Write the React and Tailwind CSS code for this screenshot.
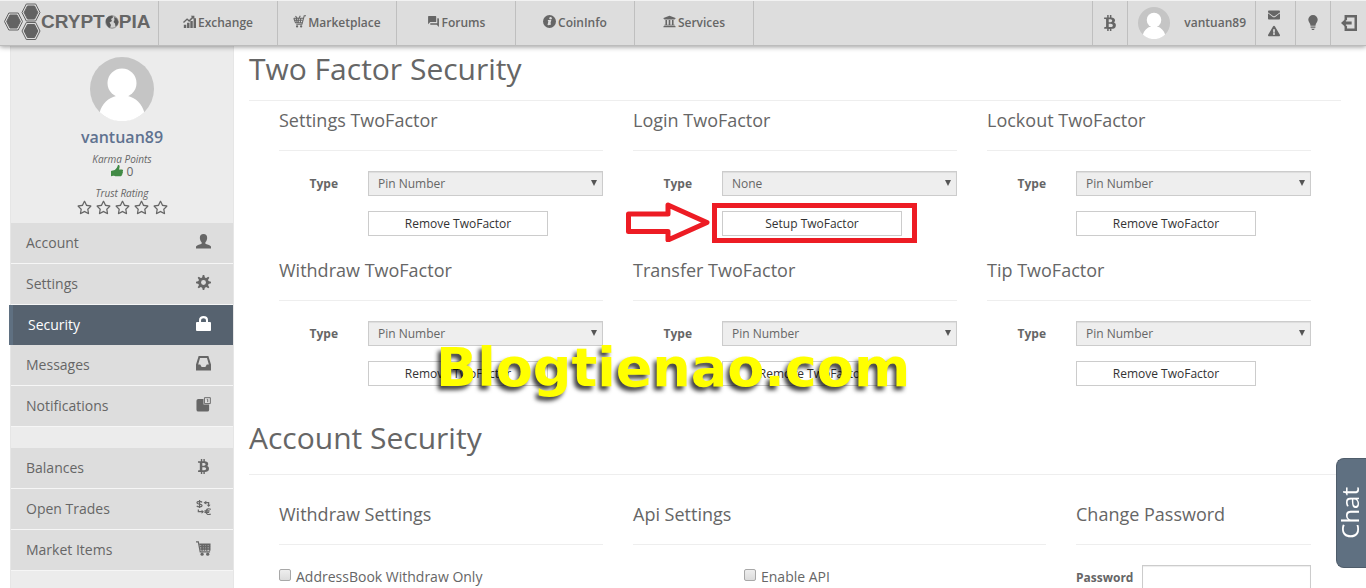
import { useState } from "react";
import {
  FaBtc,
  FaEnvelope,
  FaExclamationTriangle,
  FaRegStar,
  FaUniversity,
} from "react-icons/fa";
import { MdForum } from "react-icons/md";

const ChartIcon = ({ className }) => (
  <svg viewBox="0 0 16 16" className={className} fill="currentColor">
    <path d="M1 12h3v4H1zM5 9.500h3V16H5zM9 7.500h3V16H9zM13 4h3v12h-3z" />
    <path d="M0 8.500 5 4l2.500 2L11 2.500 9.500 1H14v4.500l-1.600-1.600L7.600 8.500 5 6.300 1.200 9.800z" />
  </svg>
);

const BasketIcon = ({ className }) => (
  <svg viewBox="0 0 16 16" className={className} fill="none" stroke="currentColor">
    <path d="M16 1h-2.200L11 11.500H4M1 4h11.500M1 4l2 5.500h8.500M2 6.500h9.500M4 4l1 5.500M6.500 4v5.500M9.500 4 9 9.500M3 1.500l2 2M9 1 7.500 3.500" strokeWidth="1.300" />
    <circle cx="5" cy="14" r="1.400" fill="currentColor" stroke="none" />
    <circle cx="10" cy="14" r="1.400" fill="currentColor" stroke="none" />
  </svg>
);

const InfoIcon = ({ className }) => (
  <svg viewBox="0 0 16 16" className={className}>
    <circle cx="8" cy="8" r="8" fill="currentColor" />
    <circle cx="9.300" cy="4" r="1.500" fill="#dddddd" />
    <path d="M6 7h3.200L8 11.500l1.700-.5M6.300 12.500 7.500 7.500" fill="none" stroke="#dddddd" strokeWidth="1.600" />
  </svg>
);

const BulbIcon = ({ className }) => (
  <svg viewBox="0 0 12 18" className={className} fill="currentColor">
    <path d="M6 0a5.300 5.300 0 0 0-5.300 5.400C.7 8 3.200 9.500 3.200 12h5.600c0-2.500 2.500-4 2.500-6.600A5.300 5.300 0 0 0 6 0zM3.300 13h5.400v1.400H3.300zM4 15.400h4L7 17H5z" />
  </svg>
);

const ExitIcon = ({ className }) => (
  <svg viewBox="0 0 18 18" className={className} fill="currentColor">
    <path d="M4 0h14v18H4v-6h2.800v3.200h8.400V2.800H6.800V6H4z" />
    <path d="M0 9l5.500-5v3.400H12v3.200H5.500V14z" />
  </svg>
);

const UserIcon = ({ className }) => (
  <svg viewBox="0 0 16 16" className={className} fill="currentColor">
    <path d="M8 0C5.500 0 4 1.700 4.100 4.300c.1 2 .9 3.700 1.900 4.600v1.600C4.700 11.300 1 11.800 0 13.300V15.500h16v-2.200C15 11.800 11.300 11.300 10 10.500V8.900c1-.9 1.800-2.600 1.900-4.600C12 1.700 10.500 0 8 0z" />
  </svg>
);

const GearIcon = ({ className }) => (
  <svg viewBox="0 0 16 16" className={className}>
    <g fill="currentColor">
      {[0, 45, 90, 135].map((angle) => (
        <path key={angle} d="M6.500 3 7.200 0h1.600l.7 3v10l-.7 3H7.200l-.7-3z" transform={`rotate(${angle} 8 8)`} />
      ))}
      <circle cx="8" cy="8" r="5.600" />
    </g>
    <circle cx="8" cy="8" r="2.600" fill="#dddddd" />
  </svg>
);

const LockIcon = ({ className }) => (
  <svg viewBox="0 0 16 16" className={className} fill="currentColor">
    <path d="M1 6.500h14a1 1 0 0 1 1 1V15a1 1 0 0 1-1 1H1a1 1 0 0 1-1-1V7.500a1 1 0 0 1 1-1z" />
    <path d="M4.300 7V4.200C4.300 2.200 5.700 1.200 8 1.200s3.700 1 3.700 3V7" fill="none" stroke="currentColor" strokeWidth="2.200" />
  </svg>
);

const TrayIcon = ({ className }) => (
  <svg viewBox="0 0 16 16" className={className} fill="currentColor">
    <path fillRule="evenodd" d="M2.800 0h10.400L16 9v6.500H0V9zM4.300 2 2.300 9H4.500l1.500 2.700h4L11.500 9h2.200l-2-7z" />
  </svg>
);

const NoticeIcon = ({ className }) => (
  <svg viewBox="0 0 16 16" className={className}>
    <path d="M2.500 2H8v6h6v5.500a2 2 0 0 1-2 2H2.500a2 2 0 0 1-2-2V4a2 2 0 0 1 2-2z" fill="currentColor" />
    <path d="M9 .7h6.300V7H9zM11.500 2.500h1v3" fill="none" stroke="currentColor" strokeWidth="1" />
  </svg>
);

const TradeIcon = ({ className }) => (
  <svg viewBox="0 0 16 16" className={className} fill="none" stroke="currentColor" strokeWidth="1.300">
    <path d="M6.500 2.500C5.500 1 1 1 1 3c0 2 5.500.8 5.500 2.800C6.500 7.700 2 7.700.8 6.200M3.800 0v8.500" />
    <path d="M15.700 10c-2.600-1.600-5 0-5 2.500s2.400 4 5 2.500M9 11.700h5.500M9 13.300h5" />
    <path d="M9 2.800h4.500V6M2.500 10v2.500H7" />
    <path d="M8 2.800 11 .8v4zM11.500 5h4l-2 2.400zM6 10.300l2.500 2.200L6 14.700z" fill="currentColor" stroke="none" />
  </svg>
);

const CartIcon = ({ className }) => (
  <svg viewBox="0 0 16 16" className={className} fill="none" stroke="currentColor">
    <path d="M0 1h2.500l2 10.500H15" strokeWidth="1.300" />
    <path d="M3.500 3.500h12M4 6h11.500M4.500 8.500h11M6.500 3v7.500M9 3v7.500M11.500 3v7.500M14.500 3v7.500" strokeWidth="1.800" />
    <circle cx="6.500" cy="14" r="1.700" fill="currentColor" stroke="none" />
    <circle cx="12.500" cy="14" r="1.700" fill="currentColor" stroke="none" />
  </svg>
);

const ThumbIcon = ({ className }) => (
  <svg viewBox="0 0 16 16" className={className} fill="currentColor">
    <path d="M0 8c1.500-1 3.500-1 5-1.500C7 5 8.500 3 9 .5 9.300-.2 11.500 0 11.500 2c0 1.500-.5 3-1 4h4c2 0 2 2 1 2.600.8.800.5 2-.3 2.400.4.900 0 1.800-.8 2.100.2 1-.4 1.900-1.400 1.900H7c-1.500 0-2.500-.7-4-.7L0 15z" />
  </svg>
);

const Avatar = ({ className }) => (
  <svg viewBox="0 0 64 64" className={className} role="img" aria-label="avatar">
    <circle cx="32" cy="32" r="32" fill="#c5c5c5" />
    <circle cx="32" cy="26" r="14.500" fill="#ffffff" />
    <path d="M26 36h12v3c8 2 14 8 16.300 16.200a32 32 0 0 1-44.600 0C12 47 18 41 26 39z" fill="#ffffff" />
  </svg>
);

const Hexagons = () => (
  <svg viewBox="0 0 37 38" className="w-[37px] h-[38px] shrink-0" fill="#636363" stroke="#636363">
    {[
      [9.500, 18.500],
      [27, 9.500],
      [27, 28],
    ].map(([x, y]) => (
      <g key={`${x}-${y}`} transform={`translate(${x} ${y})`}>
        <path d="M-9 0-4.700-8.500H4.700L9 0 4.700 8.500H-4.700z" fill="none" strokeWidth="1" />
        <path d="M-6.800 0-3.500-6.500H3.500L6.800 0 3.500 6.500H-3.500z" strokeWidth="1" />
      </g>
    ))}
  </svg>
);

const Globe = () => (
  <svg viewBox="0 0 14 14" className="w-[14px] h-[14px]">
    <circle cx="7" cy="7" r="6.200" fill="#d0d0d0" stroke="#8a8a8a" strokeWidth="1" />
    <path d="M1 4.500C2.500 1.500 5 .6 7.500.8L8 2.500 6 4l1 2-2.500 1.500L6 10l-1 3C2.500 12 .5 9 1 4.500zM9 2l3 1.500 1.500 3.500-1 3-2 1.500-.5-3L8.500 7l1-2z" fill="#5a5a5a" />
  </svg>
);

const navItems = [
  { label: "Exchange", icon: ChartIcon },
  { label: "Marketplace", icon: BasketIcon },
  { label: "Forums", icon: MdForum },
  { label: "CoinInfo", icon: InfoIcon },
  { label: "Services", icon: FaUniversity },
];

const accountLinks = [
  { label: "Account", icon: UserIcon },
  { label: "Settings", icon: GearIcon },
  { label: "Security", icon: LockIcon },
  { label: "Messages", icon: TrayIcon },
  { label: "Notifications", icon: NoticeIcon },
];

const marketLinks = [
  { label: "Balances", icon: FaBtc },
  { label: "Open Trades", icon: TradeIcon },
  { label: "Market Items", icon: CartIcon },
];

const twoFactors = [
  { name: "Settings", type: "Pin Number" },
  { name: "Login", type: "None" },
  { name: "Lockout", type: "Pin Number" },
  { name: "Withdraw", type: "Pin Number" },
  { name: "Transfer", type: "Pin Number" },
  { name: "Tip", type: "Pin Number" },
];

const Header = () => (
  <header className="relative z-10 flex h-[46px] shrink-0 border-t border-b border-t-[#f2f2f2] border-b-[#bcbcbc] bg-[#dddddd] shadow-[0_1px_5px_rgba(0,0,0,0.4)]">
    <a href="#" className="flex w-[159px] items-center border-r border-[#bfbfbf] pb-[2px] pl-1">
      <Hexagons />
      <span className="flex items-center font-['Liberation_Sans'] text-[19px] leading-5 font-bold text-[#666666]">
        CRYPT
        <Globe />
        PIA
      </span>
    </a>
    <nav className="flex">
      {navItems.map(({ label, icon: Icon }) => (
        <a
          key={label}
          href="#"
          className="flex w-[119px] items-center justify-center gap-[2px] border-r border-[#bfbfbf] text-[12px] font-semibold"
        >
          <Icon className="mb-[3px] h-[13px] w-[13px]" />
          {label}
        </a>
      ))}
    </nav>
    <div className="ml-auto flex">
      <a href="#" aria-label="Balances" className="flex w-9 items-center justify-center border-x border-[#bfbfbf]">
        <FaBtc className="h-4 w-4" />
      </a>
      <a
        href="#"
        className="flex w-32 items-center justify-between border-r border-[#bfbfbf] pr-[9px] pl-[10px] text-[12px] font-semibold"
      >
        <Avatar className="h-8 w-8" />
        vantuan89
      </a>
      <div className="flex w-10 flex-col items-center justify-center gap-1 border-r border-[#bfbfbf] pr-1">
        <FaEnvelope className="h-3 w-3" />
        <FaExclamationTriangle className="h-3 w-3" />
      </div>
      <button type="button" aria-label="Theme" className="flex w-[35px] items-center justify-center border-r border-[#bfbfbf]">
        <BulbIcon className="h-4 w-3" />
      </button>
      <button type="button" aria-label="Log out" className="flex w-[35px] items-center justify-center">
        <ExitIcon className="h-4 w-4" />
      </button>
    </div>
  </header>
);

const SideLink = ({ label, icon: Icon, active, onClick }) => (
  <a
    href="#"
    onClick={onClick}
    className={
      active
        ? "relative -ml-[2px] flex h-10 items-center justify-between border-l-4 border-[#5f7081] bg-[#56626f] pr-[22px] pb-[2px] pl-[15px] text-white"
        : "flex h-[41px] items-center justify-between border-b border-[#f6f6f6] bg-[#dddddd] pr-[22px] pb-[2px] pl-[15px]"
    }
  >
    {label}
    <Icon className="mb-[2px] h-[15px] w-[15px]" />
  </a>
);

const Sidebar = ({ active, onSelect }) => (
  <aside className="ml-[10px] w-56 shrink-0 border-x border-[#e6e6e6] bg-[#ececec]">
    <div className="flex h-[177px] flex-col items-center pt-[11px]">
      <Avatar className="h-16 w-16" />
      <a href="#" className="mt-1 text-[16px] leading-6 font-semibold text-[#5f7290]">
        vantuan89
      </a>
      <em className="mt-1 text-[10px] leading-3">Karma Points</em>
      <span className="flex items-center gap-1 text-[12px] leading-3">
        <ThumbIcon className="mb-[2px] h-3 w-3 text-[#418a45]" />0
      </span>
      <em className="mt-2 text-[10px] leading-3">Trust Rating</em>
      <span className="mt-[1px] flex gap-1">
        {[1, 2, 3, 4, 5].map((star) => (
          <FaRegStar key={star} className="h-[15px] w-[15px]" />
        ))}
      </span>
    </div>
    <nav className="text-[14px]">
      {accountLinks.map((link) => (
        <SideLink key={link.label} {...link} active={active === link.label} onClick={() => onSelect(link.label)} />
      ))}
      <div className="h-[21px]" />
      {marketLinks.map((link) => (
        <SideLink key={link.label} {...link} active={active === link.label} onClick={() => onSelect(link.label)} />
      ))}
    </nav>
  </aside>
);

// Red marker around the setup button
const Highlight = () => (
  <>
    <div className="pointer-events-none absolute -top-2 -left-[10px] h-10 w-[205px] border-5 border-[#ed1c24]" />
    <svg
      viewBox="0 0 84 40"
      className="pointer-events-none absolute -top-[9px] -left-24 h-10 w-[84px]"
      fill="#ffffff"
      stroke="#ed1c24"
      strokeWidth="5"
      strokeLinejoin="round"
    >
      <path d="M2.500 12H42V3L81 20.500 42 38V29.500H2.500z" />
    </svg>
  </>
);

const TwoFactorForm = ({ name, type }) => (
  <form>
    <h3 className="text-[18px] leading-5">{name} TwoFactor</h3>
    <hr className="my-5 border-[#eeeeee]" />
    <div className="flex items-center gap-[30px]">
      <label htmlFor={`type-${name}`} className="w-[59px] text-right text-[12px] font-bold">
        Type
      </label>
      <div className="relative flex-1">
        <select
          id={`type-${name}`}
          disabled
          className="block h-[25px] w-full appearance-none border border-[#cccccc] bg-[#eeeeee] px-[9px] text-[12px] leading-5 opacity-100 shadow-[inset_0_1px_1px_rgba(0,0,0,0.075)]"
        >
          <option>{type}</option>
        </select>
        <svg viewBox="0 0 6 6" className="pointer-events-none absolute top-[9px] right-[6px] h-[6px] w-[6px]" fill="#555555">
          <path d="M0 0h6L3 6z" />
        </svg>
      </div>
    </div>
    <div className="relative mt-[15px] ml-[89px] w-[180px]">
      <button type="button" className="block h-[25px] w-full border border-[#cccccc] bg-white text-[12px] text-[#333333]">
        {type === "None" ? "Setup TwoFactor" : "Remove TwoFactor"}
      </button>
      {type === "None" && <Highlight />}
    </div>
  </form>
);

const CheckBox = ({ label }) => (
  <label className="flex items-center gap-[5px] pt-[2px] text-[14px] leading-5">
    <input
      type="checkbox"
      className="mb-1 h-3 w-3 appearance-none rounded-[2px] border border-[#a8a8a8] bg-linear-to-b from-[#eeeeee] to-[#dcdcdc] checked:bg-[#5f7081]"
    />
    {label}
  </label>
);

export default function App() {
  const [active, setActive] = useState("Security");

  return (
    <div className="flex h-screen flex-col overflow-hidden bg-white font-['Open_Sans',sans-serif] text-[#666666]">
      <Header />
      <div className="flex min-h-0 flex-1">
        <Sidebar active={active} onSelect={setActive} />
        <main className="min-w-0 flex-1 pt-[6px] pr-[25px] pl-[15px]">
          <h2 className="text-[30px] leading-[33px]">Two Factor Security</h2>
          <hr className="mt-[15px] border-[#eeeeee]" />
          <section className="relative mt-[9px] grid grid-cols-3 gap-x-[30px] gap-y-6 px-[30px]">
            {twoFactors.map((item) => (
              <TwoFactorForm key={item.name} {...item} />
            ))}
            <span className="pointer-events-none absolute -bottom-3 left-[187px] font-['DejaVu_Sans'] text-[54px] leading-[60px] font-bold text-[#ffff00] [text-shadow:-3px_4px_4px_rgba(0,0,0,0.75)]">
              Blogtienao.com
            </span>
          </section>

          <h2 className="mt-[35px] text-[30px] leading-[33px]">Account Security</h2>
          <hr className="mt-5 border-[#eeeeee]" />
          <section className="mt-[29px] grid grid-cols-[324fr_413fr_235fr] gap-x-[30px] px-[30px]">
            <div>
              <h3 className="text-[18px] leading-5">Withdraw Settings</h3>
              <hr className="my-5 border-[#eeeeee]" />
              <CheckBox label="AddressBook Withdraw Only" />
            </div>
            <div>
              <h3 className="text-[18px] leading-5">Api Settings</h3>
              <hr className="my-5 border-[#eeeeee]" />
              <div className="pl-[111px]">
                <CheckBox label="Enable API" />
              </div>
            </div>
            <div>
              <h3 className="text-[18px] leading-5">Change Password</h3>
              <hr className="my-5 border-[#eeeeee]" />
              <div className="flex items-center justify-between gap-2">
                <label htmlFor="password" className="text-[12px] font-bold">
                  Password
                </label>
                <input
                  id="password"
                  type="password"
                  className="h-[25px] w-[169px] border border-[#cccccc] bg-white px-2 text-[12px] shadow-[inset_0_1px_1px_rgba(0,0,0,0.075)]"
                />
              </div>
            </div>
          </section>
        </main>
      </div>
      <button
        type="button"
        className="fixed right-0 bottom-5 flex h-[110px] w-[30px] items-center justify-center rounded-l-lg border border-r-0 border-[#4f5d6b] bg-[#5f7081] pr-1 text-white"
      >
        <span className="rotate-180 text-[24px] leading-7 [writing-mode:vertical-rl]">Chat</span>
      </button>
    </div>
  );
}
